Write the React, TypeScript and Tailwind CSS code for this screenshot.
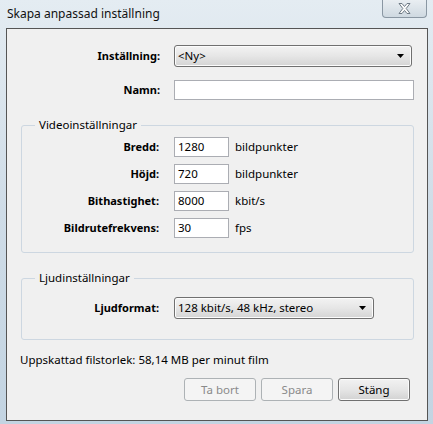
import React from "react";

const font = { fontFamily: '"Noto Sans", "Open Sans", sans-serif' };

function Arrow() {
  return (
    <svg width="7" height="4" viewBox="0 0 7 4" className="block">
      <path d="M0 0 H7 L3.5 4 Z" fill="#000" />
    </svg>
  );
}

function Combo({ text, w }: { text: string; w: string }) {
  return (
    <div
      className={`${w} h-[22px] flex items-center justify-between rounded-[3px] border border-[#707070] bg-gradient-to-b from-[#f3f3f3] via-[#e6e6e6] to-[#d4d4d4] pl-[3px] pr-[7px] shadow-[inset_0_0_0_1px_#fcfcfc]`}
    >
      <span className="text-[11.5px] leading-none text-black">{text}</span>
      <Arrow />
    </div>
  );
}

function Input({ value, w, h }: { value: string; w: string; h: string }) {
  return (
    <div
      className={`${w} ${h} flex items-center border border-[#abadb3] bg-white pl-[3px] text-[11.5px] text-black`}
    >
      {value}
    </div>
  );
}

function Row({
  label,
  value,
  unit,
}: {
  label: string;
  value: string;
  unit: string;
}) {
  return (
    <div className="flex items-center h-[20px]">
      <div className="w-[137px] text-right font-bold text-[11px] text-black">{label}</div>
      <div className="w-[15px]" />
      <Input value={value} w="w-[55px]" h="h-[20px]" />
      <div className="ml-[6px] text-[11.5px] text-black">{unit}</div>
    </div>
  );
}

function Btn({ text, disabled }: { text: string; disabled?: boolean }) {
  return disabled ? (
    <div className="w-[72px] h-[23px] flex items-center justify-center rounded-[3px] border border-[#adb2b5] bg-[#f4f4f4] text-[11.5px] text-[#8a8a8a]">
      {text}
    </div>
  ) : (
    <div className="w-[72px] h-[23px] flex items-center justify-center rounded-[3px] border border-[#707070] bg-gradient-to-b from-[#f2f2f2] via-[#e6e6e6] to-[#d2d2d2] shadow-[inset_0_0_0_1px_#fbfbfb] text-[11.5px] text-black">
      {text}
    </div>
  );
}

export default function App() {
  return (
    <div
      style={font}
      className="w-[433px] h-[424px] overflow-hidden bg-gradient-to-b from-[#e4ecf2] via-[#cfdce7] to-[#c3d4e2] flex flex-col"
    >
      {/* title bar */}
      <div className="h-[28px] flex items-start justify-between">
        <div className="pl-[7px] pt-[6px] text-[12px] leading-[16px] text-[#111]">
          Skapa anpassad inställning
        </div>
        <div className="mr-[6px] w-[45px] h-[18px] rounded-b-[4px] border border-t-0 border-[#8a97a3] bg-gradient-to-b from-[#e9eef2] to-[#cfd9e1] flex items-center justify-center">
          <svg width="13" height="11" viewBox="0 0 13 11">
            <path
              d="M1 0.5 H4 L6.5 3.5 L9 0.5 H12 L8.2 5.5 L12 10.5 H9 L6.5 7.5 L4 10.5 H1 L4.8 5.5 Z"
              fill="#fafafa"
              stroke="#6f7b86"
              strokeWidth="1"
              strokeLinejoin="round"
            />
          </svg>
        </div>
      </div>

      {/* content panel */}
      <div className="ml-[6px] w-[422px] h-[393px] border border-[#555] bg-[#f0f0f0] flex flex-col">
        {/* Inställning */}
        <div className="mt-[16px] flex items-center">
          <div className="w-[153px] text-right font-bold text-[11px] text-black">Inställning:</div>
          <div className="w-[14px]" />
          <Combo text="<Ny>" w="w-[238px]" />
        </div>
        {/* Namn */}
        <div className="mt-[13px] flex items-center">
          <div className="w-[153px] text-right font-bold text-[11px] text-black">Namn:</div>
          <div className="w-[14px]" />
          <Input value="" w="w-[240px]" h="h-[20px]" />
        </div>

        {/* Video group */}
        <fieldset className="mt-[17px] ml-[14px] w-[393px] pb-[14px] border border-[#cdd7e1] rounded-[3px]">
          <legend className="ml-[13px] px-[4px] text-[11.5px] leading-[16px] text-black">
            Videoinställningar
          </legend>
          <div className="mt-[4px] flex flex-col gap-[7px]">
            <Row label="Bredd:" value="1280" unit="bildpunkter" />
            <Row label="Höjd:" value="720" unit="bildpunkter" />
            <Row label="Bithastighet:" value="8000" unit="kbit/s" />
            <Row label="Bildrutefrekvens:" value="30" unit="fps" />
          </div>
        </fieldset>

        {/* Audio group */}
        <fieldset className="mt-[17px] ml-[14px] w-[393px] pb-[20px] border border-[#cdd7e1] rounded-[3px]">
          <legend className="ml-[13px] px-[4px] text-[11.5px] leading-[16px] text-black">
            Ljudinställningar
          </legend>
          <div className="mt-[11px] flex items-center">
            <div className="w-[137px] text-right font-bold text-[11px] text-black">Ljudformat:</div>
            <div className="w-[15px]" />
            <Combo text="128 kbit/s, 48 kHz, stereo" w="w-[200px]" />
          </div>
        </fieldset>

        <div className="mt-[12px] ml-[13px] text-[11.5px] leading-[16px] text-black">
          Uppskattad filstorlek: 58,14 MB per minut film
        </div>

        <div className="mt-[10px] mr-[17px] flex justify-end gap-[5px]">
          <Btn text="Ta bort" disabled />
          <Btn text="Spara" disabled />
          <Btn text="Stäng" />
        </div>
      </div>
    </div>
  );
}
